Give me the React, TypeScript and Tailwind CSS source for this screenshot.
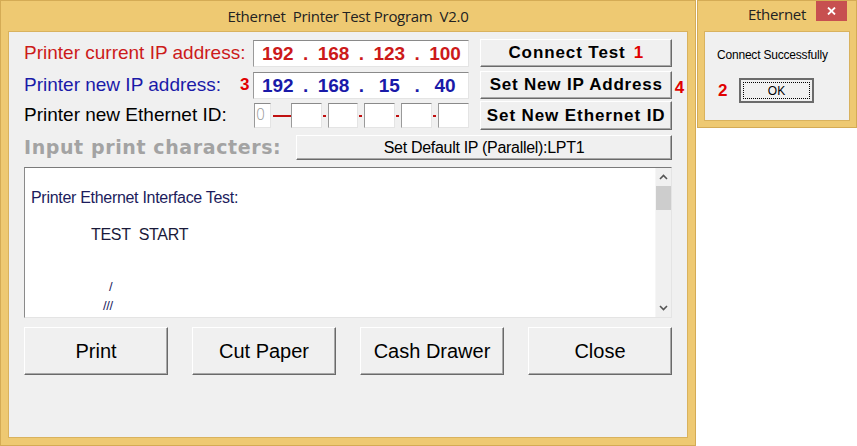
import React from "react";

const FONT = "font-['Liberation_Sans',Arial,sans-serif]";

const Btn3D = ({ className = "", children }: { className?: string; children: React.ReactNode }) => (
    <div
        className={`flex items-center justify-center bg-[#f0f0f0] border border-t-white border-l-white border-r-[#6a6a6a] border-b-[#6a6a6a] shadow-[inset_-1px_-1px_0_#a8a8a8] text-black ${className}`}
    >
        {children}
    </div>
);

const Inset = ({ className = "", children }: { className?: string; children?: React.ReactNode }) => (
    <div className={`bg-white border border-t-[#8a8a8a] border-l-[#9a9a9a] border-r-[#e4e4e4] border-b-[#e4e4e4] ${className}`}>
        {children}
    </div>
);

const IpBox = ({ parts, color }: { parts: string[]; color: string }) => (
    <Inset className={`w-[216px] h-[27px] flex items-center font-bold text-[19px] ${color}`}>
        {parts.map((p, i) => (
            <React.Fragment key={i}>
                <span className="w-[47px] text-center leading-none">{p}</span>
                {i < 3 && <span className="w-[9px] text-center leading-none">.</span>}
            </React.Fragment>
        ))}
    </Inset>
);

const Chevron = ({ up }: { up?: boolean }) => (
    <svg width="9" height="6" viewBox="0 0 9 6">
        <polyline
            points={up ? "1,5 4.5,1.5 8,5" : "1,1 4.5,4.5 8,1"}
            fill="none"
            stroke="#555"
            strokeWidth="1.6"
        />
    </svg>
);

const MainWindow = () => (
    <div className="w-[696px] h-[446px] shrink-0 bg-[#eec972] border border-[#d4ab55] flex flex-col">
        <div className="h-[30px] flex items-center justify-center text-[15px] text-[#222] whitespace-pre font-['Open_Sans',sans-serif] tracking-[-0.3px]">
            Ethernet  Printer Test Program  V2.0
        </div>
        <div className="mx-[7px] flex-1 mb-[7px] bg-[#f0f0f0] border border-[#d9b25e] px-[15px] flex flex-col relative">
            {/* row 1 */}
            <div className="mt-[7px] h-[28px] flex items-center">
                <span className="w-[230px] text-[19px] text-[#cc1a1a]">Printer current IP address:</span>
                <IpBox parts={["192", "168", "123", "100"]} color="text-[#cc1a1a]" />
                <Btn3D className="ml-[11px] w-[192px] h-[28px] font-bold text-[17px] tracking-[0.9px]">
                    Connect Test<span className="text-[#e00000] ml-[8px]">1</span>
                </Btn3D>
            </div>
            {/* row 2 */}
            <div className="mt-[4px] h-[28px] flex items-center relative">
                <span className="w-[230px] text-[19px] text-[#1a1aa8] relative">
                    Printer new IP address:
                    <span className="absolute left-[216px] top-[1px] font-bold text-[#e00000] text-[17px]">3</span>
                </span>
                <IpBox parts={["192", "168", "15", "40"]} color="text-[#1a1aa8]" />
                <Btn3D className="ml-[11px] w-[192px] h-[28px] font-bold text-[17px] tracking-[0.8px] relative">
                    Set New IP Address
                    <span className="absolute -right-[14px] top-[3px] text-[#e00000] text-[17px]">4</span>
                </Btn3D>
            </div>
            {/* row 3 */}
            <div className="mt-[2px] h-[29px] flex items-center">
                <span className="w-[230px] text-[19px] text-black">Printer new Ethernet ID:</span>
                <Inset className="w-[17px] h-[25px] flex items-center text-[15px] text-[#999] font-['DejaVu_Sans',sans-serif] font-light pl-[1px]">
                    0
                </Inset>
                <div className="ml-[2px] w-[18px] h-[2px] bg-[#c01010]" />
                {[0, 1, 2, 3, 4].map((i) => (
                    <React.Fragment key={i}>
                        <Inset className="w-[31px] h-[25px]" />
                        {i < 4 && (
                            <div className="w-[6px] flex">
                                <div className="ml-[1px] w-[3px] h-[2px] bg-[#c01010]" />
                            </div>
                        )}
                    </React.Fragment>
                ))}
                <Btn3D className="ml-[11px] w-[192px] h-[29px] font-bold text-[17px] tracking-[0.9px]">
                    Set New Ethernet ID
                </Btn3D>
            </div>
            {/* row 4 */}
            <div className="mt-[5px] h-[25px] flex items-center">
                <span className="w-[272px] text-[19px] font-bold text-[#a3a3a3] tracking-[0.6px] font-['DejaVu_Sans',sans-serif]">
                    Input print characters:
                </span>
                <Btn3D className="w-[376px] h-[25px] text-[16px] tracking-[-0.3px]">Set Default IP (Parallel):LPT1</Btn3D>
            </div>
            {/* text area */}
            <div className="mt-[7px] h-[151px] flex bg-white border border-t-[#7a7a7a] border-l-[#8a8a8a] border-r-[#e4e4e4] border-b-[#e4e4e4]">
                <div className="flex-1 pl-[6px] pt-[22px] text-[16px] tracking-[-0.3px] text-[#1c1c5c] leading-none">
                    <div>Printer Ethernet Interface Test:</div>
                    <div className="mt-[21px] ml-[60px] whitespace-pre text-[#1a1a3a]">TEST  START</div>
                    <div className="mt-[37px] ml-[78px] text-[13px]">/</div>
                    <div className="mt-[6px] ml-[72px] text-[13px]">///</div>
                </div>
                <div className="w-[16px] bg-[#f0f0f0] flex flex-col items-center border-l border-[#f6f6f6]">
                    <div className="h-[18px] flex items-center justify-center">
                        <Chevron up />
                    </div>
                    <div className="w-[15px] h-[24px] bg-[#cdcdcd]" />
                    <div className="flex-1" />
                    <div className="h-[18px] flex items-center justify-center">
                        <Chevron />
                    </div>
                </div>
            </div>
            {/* buttons */}
            <div className="mt-[9px] h-[48px] flex gap-[24px]">
                {["Print", "Cut Paper", "Cash Drawer", "Close"].map((t) => (
                    <Btn3D key={t} className="w-[144px] h-[48px] text-[20px]">
                        {t}
                    </Btn3D>
                ))}
            </div>
        </div>
    </div>
);

const Dialog = () => (
    <div className="w-[160px] h-[128px] bg-[#eec972] border border-[#d4ab55] flex flex-col relative">
        <div className="h-[28px] pb-[1px] flex items-center justify-center text-[15px] text-[#222] font-['Open_Sans',sans-serif] tracking-[-0.3px]">
            Ethernet
        </div>
        <div className="absolute top-0 right-[9px] w-[31px] h-[20px] bg-[#c75050] flex items-center justify-center">
            <svg width="9" height="8" viewBox="0 0 9 8">
                <path d="M1 0.5 L8 7.5 M8 0.5 L1 7.5" stroke="white" strokeWidth="1.8" />
            </svg>
        </div>
        <div className="mt-[2px] mx-[6px] mb-[6px] flex-1 bg-[#f0f0f0] border border-[#d9b25e] flex flex-col">
            <div className="mt-[14px] ml-[12px] text-[12px] text-black tracking-[-0.2px]">Connect Successfully</div>
            <div className="mt-[14px] flex items-center">
                <span className="ml-[13px] w-[21px] text-[#e00000] font-bold text-[17px]">2</span>
                <div className="w-[75px] h-[25px] border-2 border-[#6b6b6b] bg-[#f0f0f0] p-[2px]">
                    <div className="w-full h-full border border-dotted border-black flex items-center justify-center text-[12px] text-black">
                        OK
                    </div>
                </div>
            </div>
        </div>
    </div>
);

const App = () => {
    return (
        <div className={`w-[857px] h-[446px] bg-white flex gap-[1px] overflow-hidden ${FONT}`}>
            <MainWindow />
            <Dialog />
        </div>
    );
};

export default App;
